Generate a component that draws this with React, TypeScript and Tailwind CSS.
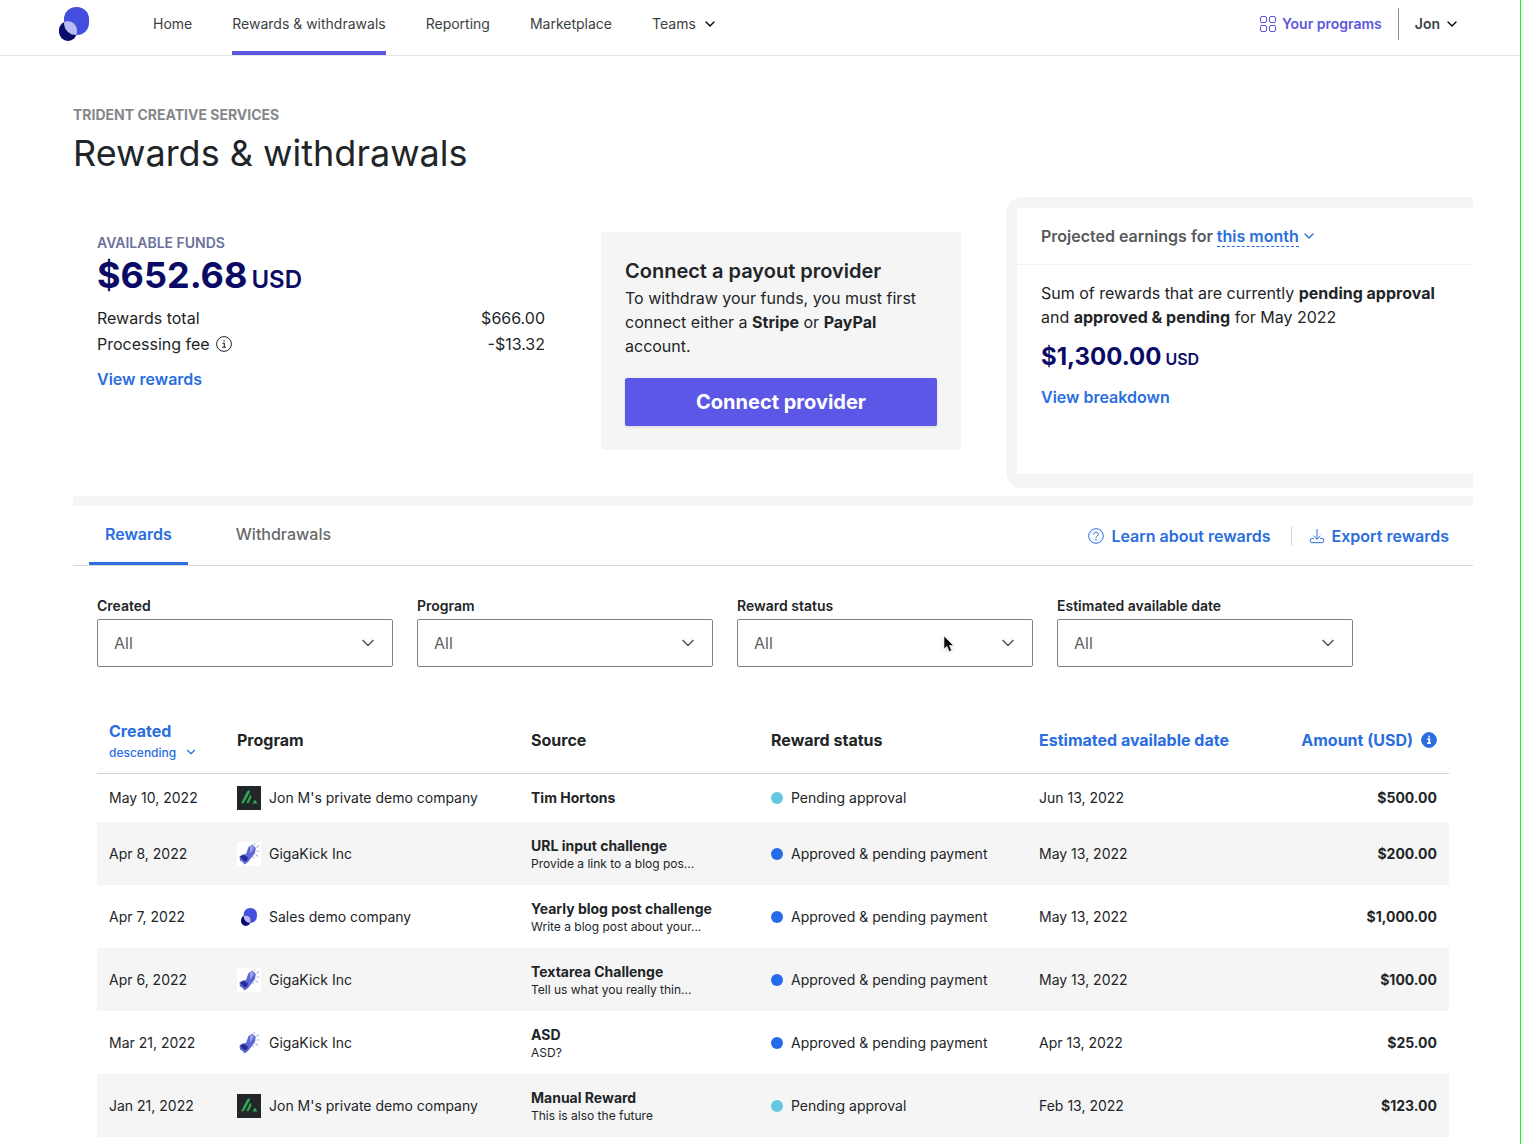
import { ChevronDown } from 'lucide-react';

type ProgramLogo = 'peaks' | 'kick' | 'blobs';
type RewardStatus = 'Pending approval' | 'Approved & pending payment';

interface Reward {
  created: string;
  logo: ProgramLogo;
  program: string;
  source: string;
  description?: string;
  status: RewardStatus;
  availableDate: string;
  amount: string;
}

const rewards: Reward[] = [
  {
    created: 'May 10, 2022',
    logo: 'peaks',
    program: "Jon M's private demo company",
    source: 'Tim Hortons',
    status: 'Pending approval',
    availableDate: 'Jun 13, 2022',
    amount: '$500.00',
  },
  {
    created: 'Apr 8, 2022',
    logo: 'kick',
    program: 'GigaKick Inc',
    source: 'URL input challenge',
    description: 'Provide a link to a blog pos...',
    status: 'Approved & pending payment',
    availableDate: 'May 13, 2022',
    amount: '$200.00',
  },
  {
    created: 'Apr 7, 2022',
    logo: 'blobs',
    program: 'Sales demo company',
    source: 'Yearly blog post challenge',
    description: 'Write a blog post about your...',
    status: 'Approved & pending payment',
    availableDate: 'May 13, 2022',
    amount: '$1,000.00',
  },
  {
    created: 'Apr 6, 2022',
    logo: 'kick',
    program: 'GigaKick Inc',
    source: 'Textarea Challenge',
    description: 'Tell us what you really thin...',
    status: 'Approved & pending payment',
    availableDate: 'May 13, 2022',
    amount: '$100.00',
  },
  {
    created: 'Mar 21, 2022',
    logo: 'kick',
    program: 'GigaKick Inc',
    source: 'ASD',
    description: 'ASD?',
    status: 'Approved & pending payment',
    availableDate: 'Apr 13, 2022',
    amount: '$25.00',
  },
  {
    created: 'Jan 21, 2022',
    logo: 'peaks',
    program: "Jon M's private demo company",
    source: 'Manual Reward',
    description: 'This is also the future',
    status: 'Pending approval',
    availableDate: 'Feb 13, 2022',
    amount: '$123.00',
  },
];

const filters = [
  { id: 'created', label: 'Created' },
  { id: 'program', label: 'Program' },
  { id: 'status', label: 'Reward status' },
  { id: 'available', label: 'Estimated available date' },
];

function BlobsLogo({ className }: { className?: string }) {
  return (
    <svg viewBox="0 0 30 34" className={className} aria-hidden="true">
      <defs>
        <clipPath id="blob-large">
          <rect x="5" y="0" width="25" height="28" rx="12" />
        </clipPath>
      </defs>
      <rect x="5" y="0" width="25" height="28" rx="12" fill="#444fdf" />
      <rect x="0" y="14" width="18" height="20" rx="9" fill="#0b0b6b" />
      <rect x="0" y="14" width="18" height="20" rx="9" fill="#b9bbf4" clipPath="url(#blob-large)" />
    </svg>
  );
}

function PeaksLogo() {
  return (
    <svg viewBox="0 0 24 24" className="size-6" aria-hidden="true">
      <rect width="24" height="24" fill="#20262a" />
      <g fill="#2fa84f">
        <path d="M4 17.500 10 5.500 12.400 4 13 6 7.200 16.600 5.200 17.600z" />
        <path d="M9.500 16.500 13.300 8.500 14.600 11 12 16.500 10 17.200z" />
        <path d="M15.500 17.500 17.800 13.600 20.400 17.500z" />
      </g>
    </svg>
  );
}

function KickLogo() {
  return (
    <svg viewBox="0 0 24 24" className="size-6" aria-hidden="true">
      <rect width="24" height="24" fill="#fff" />
      <path d="M11.500 5 15.500 2.500 18.800 6 18 11 14.500 15.500 11 20 7.500 22.500 5.500 20 3 18.500 2.500 14.500 5.500 12.500 9 12z" fill="#5f69d3" />
      <path d="M3 14.500 7 13 11 15.500 9.500 19.500 6.500 18.500z" fill="#252c93" />
      <path d="M13 4.500 15.800 3.300 16.800 6.500 13 11.500z" fill="#9a9fe8" />
      <path d="M15.500 14 16.500 16M18.500 12.500 21 14.500M19.500 9 22.500 9M19.500 5.500 22 3.500M17.300 2.500 17.800 1" stroke="#b3b8ea" strokeWidth="1.200" fill="none" />
    </svg>
  );
}

function ProgramIcon({ logo }: { logo: ProgramLogo }) {
  if (logo === 'peaks') return <PeaksLogo />;
  if (logo === 'kick') return <KickLogo />;
  return (
    <span className="flex size-6 items-center justify-center">
      <BlobsLogo className="h-[18px] w-4" />
    </span>
  );
}

function GridIcon() {
  return (
    <svg viewBox="0 0 16 16" className="size-4" fill="none" stroke="currentColor" aria-hidden="true">
      <rect x="0.5" y="0.5" width="6" height="6" rx="1.500" />
      <rect x="9.5" y="0.5" width="6" height="6" rx="1.500" />
      <rect x="0.5" y="9.500" width="6" height="6" rx="1.500" />
      <rect x="9.5" y="9.500" width="6" height="6" rx="1.500" />
    </svg>
  );
}

function InfoIcon({ filled = false }: { filled?: boolean }) {
  return (
    <svg viewBox="0 0 16 16" className="size-4" fill="none" aria-hidden="true">
      <circle cx="8" cy="8" r="7.400" fill={filled ? 'currentColor' : 'none'} stroke="currentColor" />
      <g stroke={filled ? '#fff' : 'currentColor'} strokeWidth={filled ? 1.8 : 1.1}>
        <path d="M6.400 7.200H8.300V11.200M6.200 11.200H10" />
        <path d="M7.300 4.700H8.900" />
      </g>
    </svg>
  );
}

function HelpIcon() {
  return (
    <svg viewBox="0 0 16 16" className="size-4" fill="none" stroke="currentColor" aria-hidden="true">
      <circle cx="8" cy="8" r="7.300" />
      <path d="M5.800 6.300a2.200 2.200 0 1 1 3.400 1.800C8.400 8.600 8 8.900 8 9.800" strokeLinecap="round" />
      <circle cx="8" cy="11.700" r="0.400" fill="currentColor" />
    </svg>
  );
}

function DownloadIcon() {
  return (
    <svg viewBox="0 0 16 16" className="size-4" fill="none" stroke="currentColor" strokeLinecap="round" strokeLinejoin="round" aria-hidden="true">
      <path d="M8 1.500V11M4.800 8 8 11.200 11.200 8" />
      <path d="M4.300 10.500H2.800a1.500 1.500 0 0 0-1.500 1.500v1.200a1.500 1.500 0 0 0 1.500 1.500h10.400a1.500 1.500 0 0 0 1.500-1.500V12a1.500 1.500 0 0 0-1.500-1.500h-1.500" />
    </svg>
  );
}

function Pointer() {
  return (
    <svg viewBox="0 0 12 18" className="pointer-events-none absolute bottom-3.5 left-[206px] h-[18px] w-3 drop-shadow-sm" aria-hidden="true">
      <path d="M1 1V14L4 11.300 6.200 16.500 8.600 15.500 6.400 10.500H10.500Z" fill="#000" stroke="#fff" strokeWidth="0.600" />
    </svg>
  );
}

function Header() {
  return (
    <header className="flex h-14 items-stretch border-b border-[#e0e4e5] pr-[60px] pl-[59px] text-sm text-[#3c3f42]">
      <a href="#home" aria-label="Dashboard" className="mr-16 pt-[7px]">
        <BlobsLogo className="h-[34px] w-[30px]" />
      </a>
      <nav className="flex flex-1 gap-10">
        <a href="#home" className="pt-3.5">Home</a>
        <a href="#rewards" className="border-b-4 border-[#5c57dc] pt-3.5">Rewards &amp; withdrawals</a>
        <a href="#reporting" className="pt-3.5">Reporting</a>
        <a href="#marketplace" className="pt-3.5">Marketplace</a>
        <button className="flex items-start gap-1.5 pt-3.5">
          Teams
          <ChevronDown className="mt-0.5 size-4 text-black" />
        </button>
      </nav>
      <div className="flex items-start pt-2 font-semibold">
        <a href="#programs" className="flex h-8 items-center gap-1.5 text-[#5c57dc]">
          <GridIcon />
          Your programs
        </a>
        <button className="ml-4 flex h-8 items-center gap-1 border-l border-[#8f9294] pl-4">
          Jon
          <ChevronDown className="size-4 text-black" />
        </button>
      </div>
    </header>
  );
}

function AvailableFunds() {
  return (
    <section className="flex-1 pt-9 text-base text-[#222527]">
      <h2 className="text-sm leading-5 font-semibold text-[#6c709c] uppercase">Available funds</h2>
      <p className="flex items-baseline gap-1 text-4xl leading-11 font-bold text-[#0b0b66]">
        $652.68
        <span className="text-2xl font-semibold">USD</span>
      </p>
      <dl className="mt-2 leading-[26px]">
        <div className="flex justify-between">
          <dt>Rewards total</dt>
          <dd>$666.00</dd>
        </div>
        <div className="flex justify-between">
          <dt className="flex items-center gap-1.5">
            Processing fee
            <InfoIcon />
          </dt>
          <dd>-$13.32</dd>
        </div>
      </dl>
      <a href="#list" className="mt-2.5 inline-block font-semibold text-[#2a6edf]">View rewards</a>
    </section>
  );
}

function PayoutProvider() {
  return (
    <section className="mt-[35px] mb-[46px] ml-14 w-[360px] rounded bg-[#f5f5f5] p-6 text-[#222527]">
      <h2 className="text-xl leading-[30px] font-semibold">Connect a payout provider</h2>
      <p className="text-base leading-6">
        To withdraw your funds, you must first connect either a <b>Stripe</b> or <b>PayPal</b> account.
      </p>
      <button className="mt-5 h-12 w-full rounded-xs bg-[#5c57e6] text-xl font-bold text-white shadow-sm">
        Connect provider
      </button>
    </section>
  );
}

function ProjectedEarnings() {
  return (
    <div className="mb-2 ml-[45px] flex w-[467px] rounded-l-2xl bg-[#f5f5f7] pt-[11px] pb-3.5 pl-[11px]">
      <section className="w-full bg-white text-base text-[#222527]">
        <h2 className="flex h-[57px] items-center border-b border-[#f1f1f3] px-6 font-semibold text-[#56595b]">
          Projected earnings for
          <button className="ml-1 flex items-center gap-0.5 text-[#2a6edf]">
            <span className="border-b border-dashed border-[#2a6edf] leading-5">this month</span>
            <ChevronDown className="size-4" strokeWidth={2} />
          </button>
        </h2>
        <div className="px-6 pt-4">
          <p className="leading-6">
            Sum of rewards that are currently <b>pending approval</b> and <b>approved &amp; pending</b> for May 2022
          </p>
          <p className="mt-2 flex items-baseline gap-1 text-2xl leading-10 font-bold text-[#0b0b66]">
            $1,300.00
            <span className="text-base font-semibold">USD</span>
          </p>
          <a href="#breakdown" className="mt-2 inline-block font-semibold text-[#2a6edf]">View breakdown</a>
        </div>
      </section>
    </div>
  );
}

function TabBar() {
  return (
    <div className="flex h-[60px] items-stretch border-b border-[#d6d8da] pr-6 pl-4 text-base">
      <div role="tablist" className="flex flex-1 gap-8 font-medium">
        <button role="tab" aria-selected="true" className="border-b-3 border-[#2a6edf] px-4 font-semibold text-[#2a6edf]">
          Rewards
        </button>
        <button role="tab" aria-selected="false" className="border-b-3 border-transparent px-4 text-[#67696b]">
          Withdrawals
        </button>
      </div>
      <div className="flex items-center font-semibold text-[#2a6edf]">
        <a href="#learn" className="flex items-center gap-[7px]">
          <HelpIcon />
          Learn about rewards
        </a>
        <span className="mr-[17px] ml-5 h-5 w-px bg-[#d6d8da]" />
        <a href="#export" className="flex items-center gap-[7px]">
          <DownloadIcon />
          Export rewards
        </a>
      </div>
    </div>
  );
}

function Filters() {
  return (
    <div className="flex gap-6 px-6 pt-[30px] text-[#222527]">
      {filters.map(({ id, label }) => (
        <div key={id} className="relative w-[296px]">
          <label htmlFor={id} className="block pb-[3px] text-sm font-semibold">{label}</label>
          <div className="relative">
            <select id={id} className="h-12 w-full appearance-none rounded-xs border border-[#808386] bg-white px-4 text-base text-[#5c5f61]">
              <option>All</option>
            </select>
            <ChevronDown className="pointer-events-none absolute top-3.5 right-[15px] size-5 text-[#5c5f61]" strokeWidth={2} />
          </div>
          {id === 'status' && <Pointer />}
        </div>
      ))}
    </div>
  );
}

function RewardsTable() {
  return (
    <div className="px-6 pt-10">
      <table className="w-full table-fixed text-left text-sm text-[#222527]">
        <thead>
          <tr className="h-[66px] border-b border-[#cfd1d3] text-base">
            <th className="w-32 px-3 text-[#2a6edf]" aria-sort="descending">
              <button className="block pt-1 text-left">
                <span className="block leading-[21px]">Created</span>
                <span className="flex items-center gap-2 text-xs leading-[21px] font-medium">
                  descending
                  <ChevronDown className="size-3.5" strokeWidth={2} />
                </span>
              </button>
            </th>
            <th className="w-[294px] px-3">Program</th>
            <th className="w-60 px-3">Source</th>
            <th className="w-[268px] px-3">Reward status</th>
            <th className="w-[230px] px-3 text-[#2a6edf]">Estimated available date</th>
            <th className="px-3 text-[#2a6edf]">
              <span className="flex items-center justify-end gap-2">
                Amount (USD)
                <InfoIcon filled />
              </span>
            </th>
          </tr>
        </thead>
        <tbody>
          {rewards.map((reward) => (
            <tr key={reward.created} className={reward.description ? 'h-[63px] even:bg-[#f5f5f5]' : 'h-[49px]'}>
              <td className="px-3">{reward.created}</td>
              <td className="px-3">
                <span className="flex items-center gap-2">
                  <ProgramIcon logo={reward.logo} />
                  {reward.program}
                </span>
              </td>
              <td className="px-3">
                <span className="block leading-5 font-bold">{reward.source}</span>
                {reward.description && <span className="block text-xs leading-4">{reward.description}</span>}
              </td>
              <td className="px-3">
                <span className="flex items-center gap-2">
                  <span className={`size-3 rounded-full ${reward.status === 'Pending approval' ? 'bg-[#65c8e0]' : 'bg-[#256bea]'}`} />
                  {reward.status}
                </span>
              </td>
              <td className="px-3">{reward.availableDate}</td>
              <td className="px-3 text-right font-bold">{reward.amount}</td>
            </tr>
          ))}
        </tbody>
      </table>
    </div>
  );
}

export default function App() {
  return (
    <div className="min-h-screen border-r border-[#00ff00] bg-white font-['Inter',sans-serif]">
      <Header />
      <main className="pt-[47px] pr-[47px] pb-[7px] pl-[73px]">
        <p className="text-sm leading-6 font-bold text-[#85888b] uppercase">Trident Creative Services</p>
        <h1 className="mt-0.5 text-4xl leading-12 text-[#222527]">Rewards &amp; withdrawals</h1>
        <div className="mt-5 flex overflow-hidden pl-6">
          <AvailableFunds />
          <PayoutProvider />
          <ProjectedEarnings />
        </div>
        <div className="border-t-10 border-[#f5f5f5]">
          <TabBar />
          <Filters />
          <RewardsTable />
        </div>
      </main>
    </div>
  );
}
